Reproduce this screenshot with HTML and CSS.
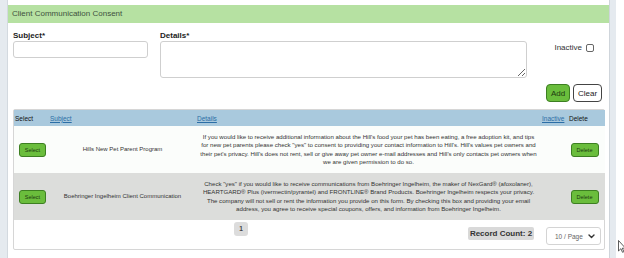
FILE: index.html
```html
<!DOCTYPE html>
<html lang="en">
<head>
    <meta charset="UTF-8">
    <meta name="viewport" content="width=device-width, initial-scale=1.0">
    <title>Client Communication Consent</title>
    <link rel="stylesheet" href="styles.css">
</head>
<body>
    <div class="page">
        <div class="rail rail-left"></div>

        <div class="main">
            <div class="section-title">Client Communication Consent</div>

            <div class="form-row">
                <div class="field field-subject">
                    <label>Subject*</label>
                    <input type="text" class="input">
                </div>
                <div class="field field-details">
                    <label>Details*</label>
                    <textarea class="input textarea"></textarea>
                </div>
                <div class="field-inactive">
                    <label>Inactive</label>
                    <input type="checkbox" class="check">
                </div>
            </div>

            <div class="actions">
                <button class="btn btn-add">Add</button>
                <button class="btn btn-clear">Clear</button>
            </div>

            <div class="grid-box">
                <table class="grid">
                    <thead>
                        <tr>
                            <th class="col-select">Select</th>
                            <th class="col-subject"><a href="#">Subject</a></th>
                            <th class="col-details"><a href="#">Details</a></th>
                            <th class="col-inactive"><a href="#">Inactive</a></th>
                            <th class="col-delete">Delete</th>
                        </tr>
                    </thead>
                    <tbody>
                        <tr>
                            <td class="col-select"><button class="btn-row">Select</button></td>
                            <td class="col-subject">Hills New Pet Parent Program</td>
                            <td class="col-details">If you would like to receive additional information about the Hill's food your pet has been eating, a free adoption kit, and tips<br>for new pet parents please check "yes" to consent to providing your contact information to Hill's. Hill's values pet owners and<br>their pet's privacy. Hill's does not rent, sell or give away pet owner e-mail addresses and Hill's only contacts pet owners when<br>we are given permission to do so.</td>
                            <td class="col-inactive"></td>
                            <td class="col-delete"><button class="btn-row">Delete</button></td>
                        </tr>
                        <tr class="alt">
                            <td class="col-select"><button class="btn-row">Select</button></td>
                            <td class="col-subject">Boehringer Ingelheim Client Communication</td>
                            <td class="col-details">Check "yes" if you would like to receive communications from Boehringer Ingelheim, the maker of NexGard® (afoxolaner),<br>HEARTGARD® Plus (ivermectin/pyrantel) and FRONTLINE® Brand Products. Boehringer Ingelheim respects your privacy.<br>The company will not sell or rent the information you provide on this form. By checking this box and providing your email<br>address, you agree to receive special coupons, offers, and information from Boehringer Ingelheim.</td>
                            <td class="col-inactive"></td>
                            <td class="col-delete"><button class="btn-row">Delete</button></td>
                        </tr>
                    </tbody>
                </table>

                <div class="pager">
                    <div class="pages"><span class="page-num">1</span></div>
                    <div class="record-count">Record Count: 2</div>
                    <div class="page-size">
                        <span>10 / Page</span>
                        <svg width="7" height="5" viewBox="0 0 7 5" fill="none" stroke="#333" stroke-width="1.4" stroke-linecap="round" stroke-linejoin="round">
                            <path d="M1 1l2.5 2.5L6 1"></path>
                        </svg>
                    </div>
                </div>
            </div>
        </div>

        <div class="rail rail-right"></div>
    </div>

    <!-- mouse pointer sitting over the page -->
    <svg class="cursor" width="8" height="13" viewBox="0 0 8 13">
        <path d="M0.5 0.5v10.5l2.4-2.3 1.6 3.6 1.4-0.6-1.6-3.5h3.2z" fill="#fff" stroke="#333" stroke-width="0.8"></path>
    </svg>
</body>
</html>
```

FILE: styles.css
```css
:root {
    --green-light: #b6e1a2;
    --green: #6abd3c;
    --green-dark: #3d7f22;
    --blue-head: #a9c9dd;
    --row-alt: #dcdddb;
    --border: #d6d6d6;
    --text: #333;
    --link: #2b6ea6;
}

* {
    margin: 0;
    padding: 0;
    box-sizing: border-box;
}

body {
    font-family: "Liberation Sans", Arial, sans-serif;
    color: var(--text);
    background: #fff;
    width: 624px;
    height: 258px;
    overflow: hidden;
    position: relative;
}

.page {
    display: flex;
    height: 258px;
}

.rail {
    background-color: #e5eaef;
}

.rail-left {
    width: 8px;
    border-right: 1px solid #d3d9df;
}

.rail-right {
    width: 7px;
    border-left: 1px solid #cfd5db;
}

.main {
    width: 601px;
    padding-top: 5px;
}

.section-title {
    height: 18px;
    line-height: 18px;
    background-color: var(--green-light);
    padding-left: 4px;
    font-size: 8px;
    color: #3f5140;
}

.form-row {
    display: flex;
    padding: 7px 0 0 5px;
}

.field label,
.field-inactive label {
    display: block;
    font-size: 8px;
    font-weight: bold;
    color: #222;
    line-height: 11px;
}

.field-subject {
    width: 135px;
    margin-right: 12px;
}

.field-details {
    width: 367px;
}

.input {
    display: block;
    width: 100%;
    height: 17px;
    border: 1px solid #cfcfcf;
    border-radius: 3px;
    background: #fff;
    font-family: inherit;
}

.textarea {
    height: 37px;
}

.field-inactive {
    flex: 1;
    display: flex;
    justify-content: flex-end;
    align-items: center;
    gap: 4px;
    padding: 12px 15px 0 0;
    align-self: flex-start;
}

.field-inactive label {
    font-weight: normal;
    color: #333;
}

.check {
    appearance: none;
    width: 8px;
    height: 8px;
    border: 1px solid #666;
    border-radius: 2px;
    background: #fff;
}

.actions {
    display: flex;
    justify-content: flex-end;
    gap: 3px;
    padding: 6px 7px 0 0;
}

.btn {
    height: 18px;
    border-radius: 4px;
    font-family: inherit;
    font-size: 8px;
    cursor: pointer;
}

.btn-add {
    width: 24px;
    background-color: var(--green);
    border: 1px solid var(--green-dark);
    color: #1d3a10;
}

.btn-clear {
    width: 29px;
    background-color: #fff;
    border: 1px solid #444;
    color: #222;
}

.grid-box {
    margin: 7px 4px 0 5px;
    border: 1px solid var(--border);
    border-radius: 2px;
}

.grid {
    width: 100%;
    border-collapse: collapse;
    table-layout: fixed;
}

.grid th {
    height: 16px;
    background-color: var(--blue-head);
    font-size: 6.5px;
    font-weight: normal;
    color: #111;
    text-align: left;
    padding-left: 1px;
}

.grid th a {
    color: var(--link);
}

.grid td {
    height: 47px;
    font-size: 6px;
    line-height: 8.5px;
    text-align: center;
    vertical-align: middle;
    color: #333;
    background-color: #fbfdfb;
}

.grid tr.alt td {
    background-color: var(--row-alt);
}

.col-select { width: 35px; }
.col-subject { width: 147px; }
.col-details { width: 345px; }
.col-inactive { width: 27px; }
.col-delete { width: 37px; }

.grid td.col-details {
    font-size: 6.1px;
    white-space: nowrap;
    padding: 0 2px;
}

.btn-row {
    width: 27px;
    height: 14px;
    background-color: var(--green);
    border: 1px solid var(--green-dark);
    border-radius: 3px;
    font-family: inherit;
    font-size: 5.5px;
    color: #1d3a10;
}

.grid td.col-select .btn-row {
    margin-left: 2px;
}

.grid td.col-delete .btn-row {
    width: 28px;
    margin-right: 4px;
}

.pager {
    display: flex;
    align-items: flex-start;
    height: 29px;
}

.pages {
    flex: 1;
    display: flex;
    justify-content: center;
    padding-top: 2px;
}

.page-num {
    width: 14px;
    height: 14px;
    line-height: 14px;
    text-align: center;
    background-color: #dcdcdc;
    border-radius: 3px;
    font-size: 6.5px;
    font-weight: bold;
    color: #444;
}

.record-count {
    margin-top: 7px;
    width: 66px;
    height: 13px;
    line-height: 13px;
    text-align: center;
    background-color: #d9d9d9;
    border-radius: 2px;
    font-size: 8px;
    font-weight: bold;
    color: #333;
}

.page-size {
    margin: 7px 3px 0 12px;
    width: 55px;
    height: 18px;
    display: flex;
    align-items: center;
    justify-content: space-between;
    padding: 0 5px 0 8px;
    border: 1px solid #d4d4d4;
    border-radius: 3px;
    font-size: 6.5px;
    color: #666;
}

.cursor {
    position: absolute;
    left: 618px;
    top: 240px;
}
```
